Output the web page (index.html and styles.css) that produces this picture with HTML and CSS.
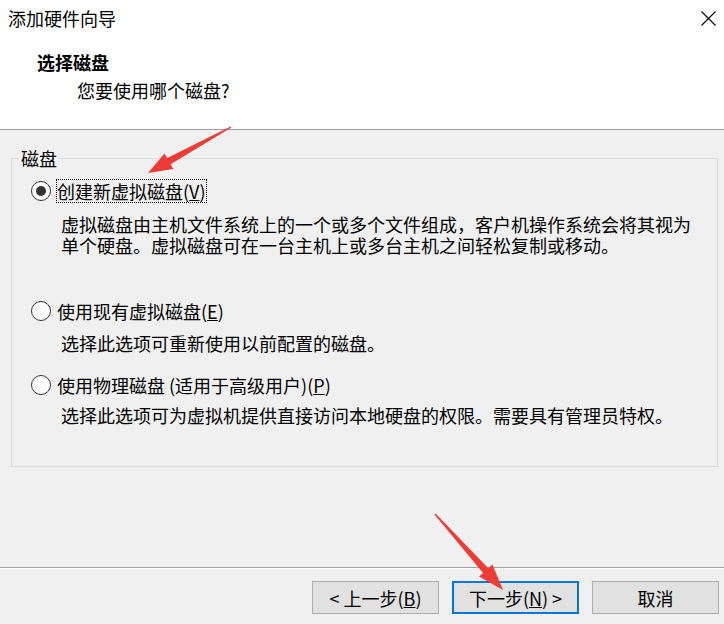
FILE: index.html
```html
<!DOCTYPE html>
<html>
<head>
  <title>添加硬件向导</title>
  <link rel="stylesheet" href="styles.css">
</head>
<body>
  <div class="dialog">
    <header class="wizard-head">
      <div class="title-row">
        <span class="title">添加硬件向导</span>
        <svg class="close-icon" width="15" height="15" viewBox="0 0 15 15">
          <path d="M0.5 0.5 L14.5 14.5 M14.5 0.5 L0.5 14.5" stroke="#000" stroke-width="1.1" fill="none"/>
        </svg>
      </div>
      <div class="step-title">选择磁盘</div>
      <div class="step-sub">您要使用哪个磁盘?</div>
    </header>

    <main class="wizard-body">
      <fieldset class="group">
        <legend>磁盘</legend>

        <div class="option option-new">
          <span class="radio checked"></span>
          <span class="label focused">创建新虚拟磁盘(<u>V</u>)</span>
        </div>
        <p class="desc desc-new">虚拟磁盘由主机文件系统上的一个或多个文件组成，客户机操作系统会将其视为<br>单个硬盘。虚拟磁盘可在一台主机上或多台主机之间轻松复制或移动。</p>

        <div class="option option-existing">
          <span class="radio"></span>
          <span class="label">使用现有虚拟磁盘(<u>E</u>)</span>
        </div>
        <p class="desc">选择此选项可重新使用以前配置的磁盘。</p>

        <div class="option option-physical">
          <span class="radio"></span>
          <span class="label">使用物理磁盘 (适用于高级用户)(<u>P</u>)</span>
        </div>
        <p class="desc desc-physical">选择此选项可为虚拟机提供直接访问本地硬盘的权限。需要具有管理员特权。</p>
      </fieldset>
    </main>

    <footer class="wizard-foot">
      <button class="btn">&lt; 上一步(<u>B</u>)</button>
      <button class="btn btn-default">下一步(<u>N</u>) &gt;</button>
      <button class="btn">取消</button>
    </footer>

    <!-- red annotation arrows from the screenshot -->
    <svg class="marks" width="724" height="624" viewBox="0 0 724 624">
      <polygon points="230.7,126.4 167.2,158.1 164.5,153.4 148,173 173.3,169.0 170.6,164.2 231.3,127.6" fill="#ef3b36"/>
      <polygon points="435.5,513.5 488.3,568.3 492.4,564.6 503,590 479.0,576.6 483.1,572.9 434.5,514.5" fill="#ef3b36"/>
    </svg>
  </div>
</body>
</html>
```

FILE: styles.css
```css
/* wizard dialog */
body {
  margin: 0;
  font-family: "Noto Sans CJK SC", sans-serif;
  font-size: 18px;
  color: #000;
  background-color: #f0f0f0;
}

.dialog {
  position: relative;
  width: 724px;
  height: 624px;
  display: flex;
  flex-direction: column;
  overflow: hidden;
}

.wizard-head {
  height: 129px;
  flex: none;
  background-color: #fff;
  border-bottom: 1px solid #a0a0a0;
}

.title-row {
  display: flex;
  justify-content: space-between;
  align-items: center;
  padding: 6px 8px 0 8px;
  line-height: 24px;
}

.step-title {
  margin: 20px 0 0 37px;
  line-height: 24px;
  font-weight: bold;
}

.step-sub {
  margin: 4px 0 0 77px;
  line-height: 24px;
}

.wizard-body {
  flex: 1;
  display: flex;
  flex-direction: column;
}

.group {
  margin: 18px 6px 0 11px;
  padding: 0;
  height: 319px;
  box-sizing: border-box;
  border: 1px solid #dcdcdc;
  min-width: 0;
}

.group legend {
  margin-left: 7px;
  padding: 0 2px;
  line-height: 20px;
}

.option {
  display: flex;
  align-items: center;
  height: 24px;
  padding-left: 19px;
}

.option-new {
  margin-top: 11px;
}

.option-existing {
  margin-top: 43px;
}

.option-physical {
  margin-top: 19px;
}

.radio {
  width: 18px;
  height: 18px;
  border: 1px solid #333;
  border-radius: 50%;
  background-color: #fff;
  display: flex;
  justify-content: center;
  align-items: center;
  flex: none;
}

.radio.checked::after {
  content: "";
  width: 10px;
  height: 10px;
  border-radius: 50%;
  background-color: #333;
}

.label {
  margin-left: 6px;
  line-height: 22px;
  white-space: nowrap;
}

.label.focused {
  outline: 1px dotted #000;
}

.desc {
  margin: 10px 0 0 49px;
  line-height: 21px;
  white-space: nowrap;
}

.desc-new {
  margin-top: 11px;
}

.desc-physical {
  margin-top: 8px;
}

.wizard-foot {
  height: 57px;
  flex: none;
  box-sizing: border-box;
  border-top: 1px solid #a0a0a0;
  box-shadow: inset 0 1px 0 #fff;
  display: flex;
  justify-content: flex-end;
  align-items: flex-start;
  gap: 13px;
  padding: 13px 5px 0 0;
}

.btn {
  width: 127px;
  height: 33px;
  box-sizing: border-box;
  padding: 0;
  background-color: #e1e1e1;
  border: 1px solid #adadad;
  font-family: inherit;
  font-size: 18px;
  color: #000;
  line-height: 22px;
}

.btn-default {
  border: 2px solid #0078d7;
}

.marks {
  position: absolute;
  top: 0;
  left: 0;
  pointer-events: none;
}
```
